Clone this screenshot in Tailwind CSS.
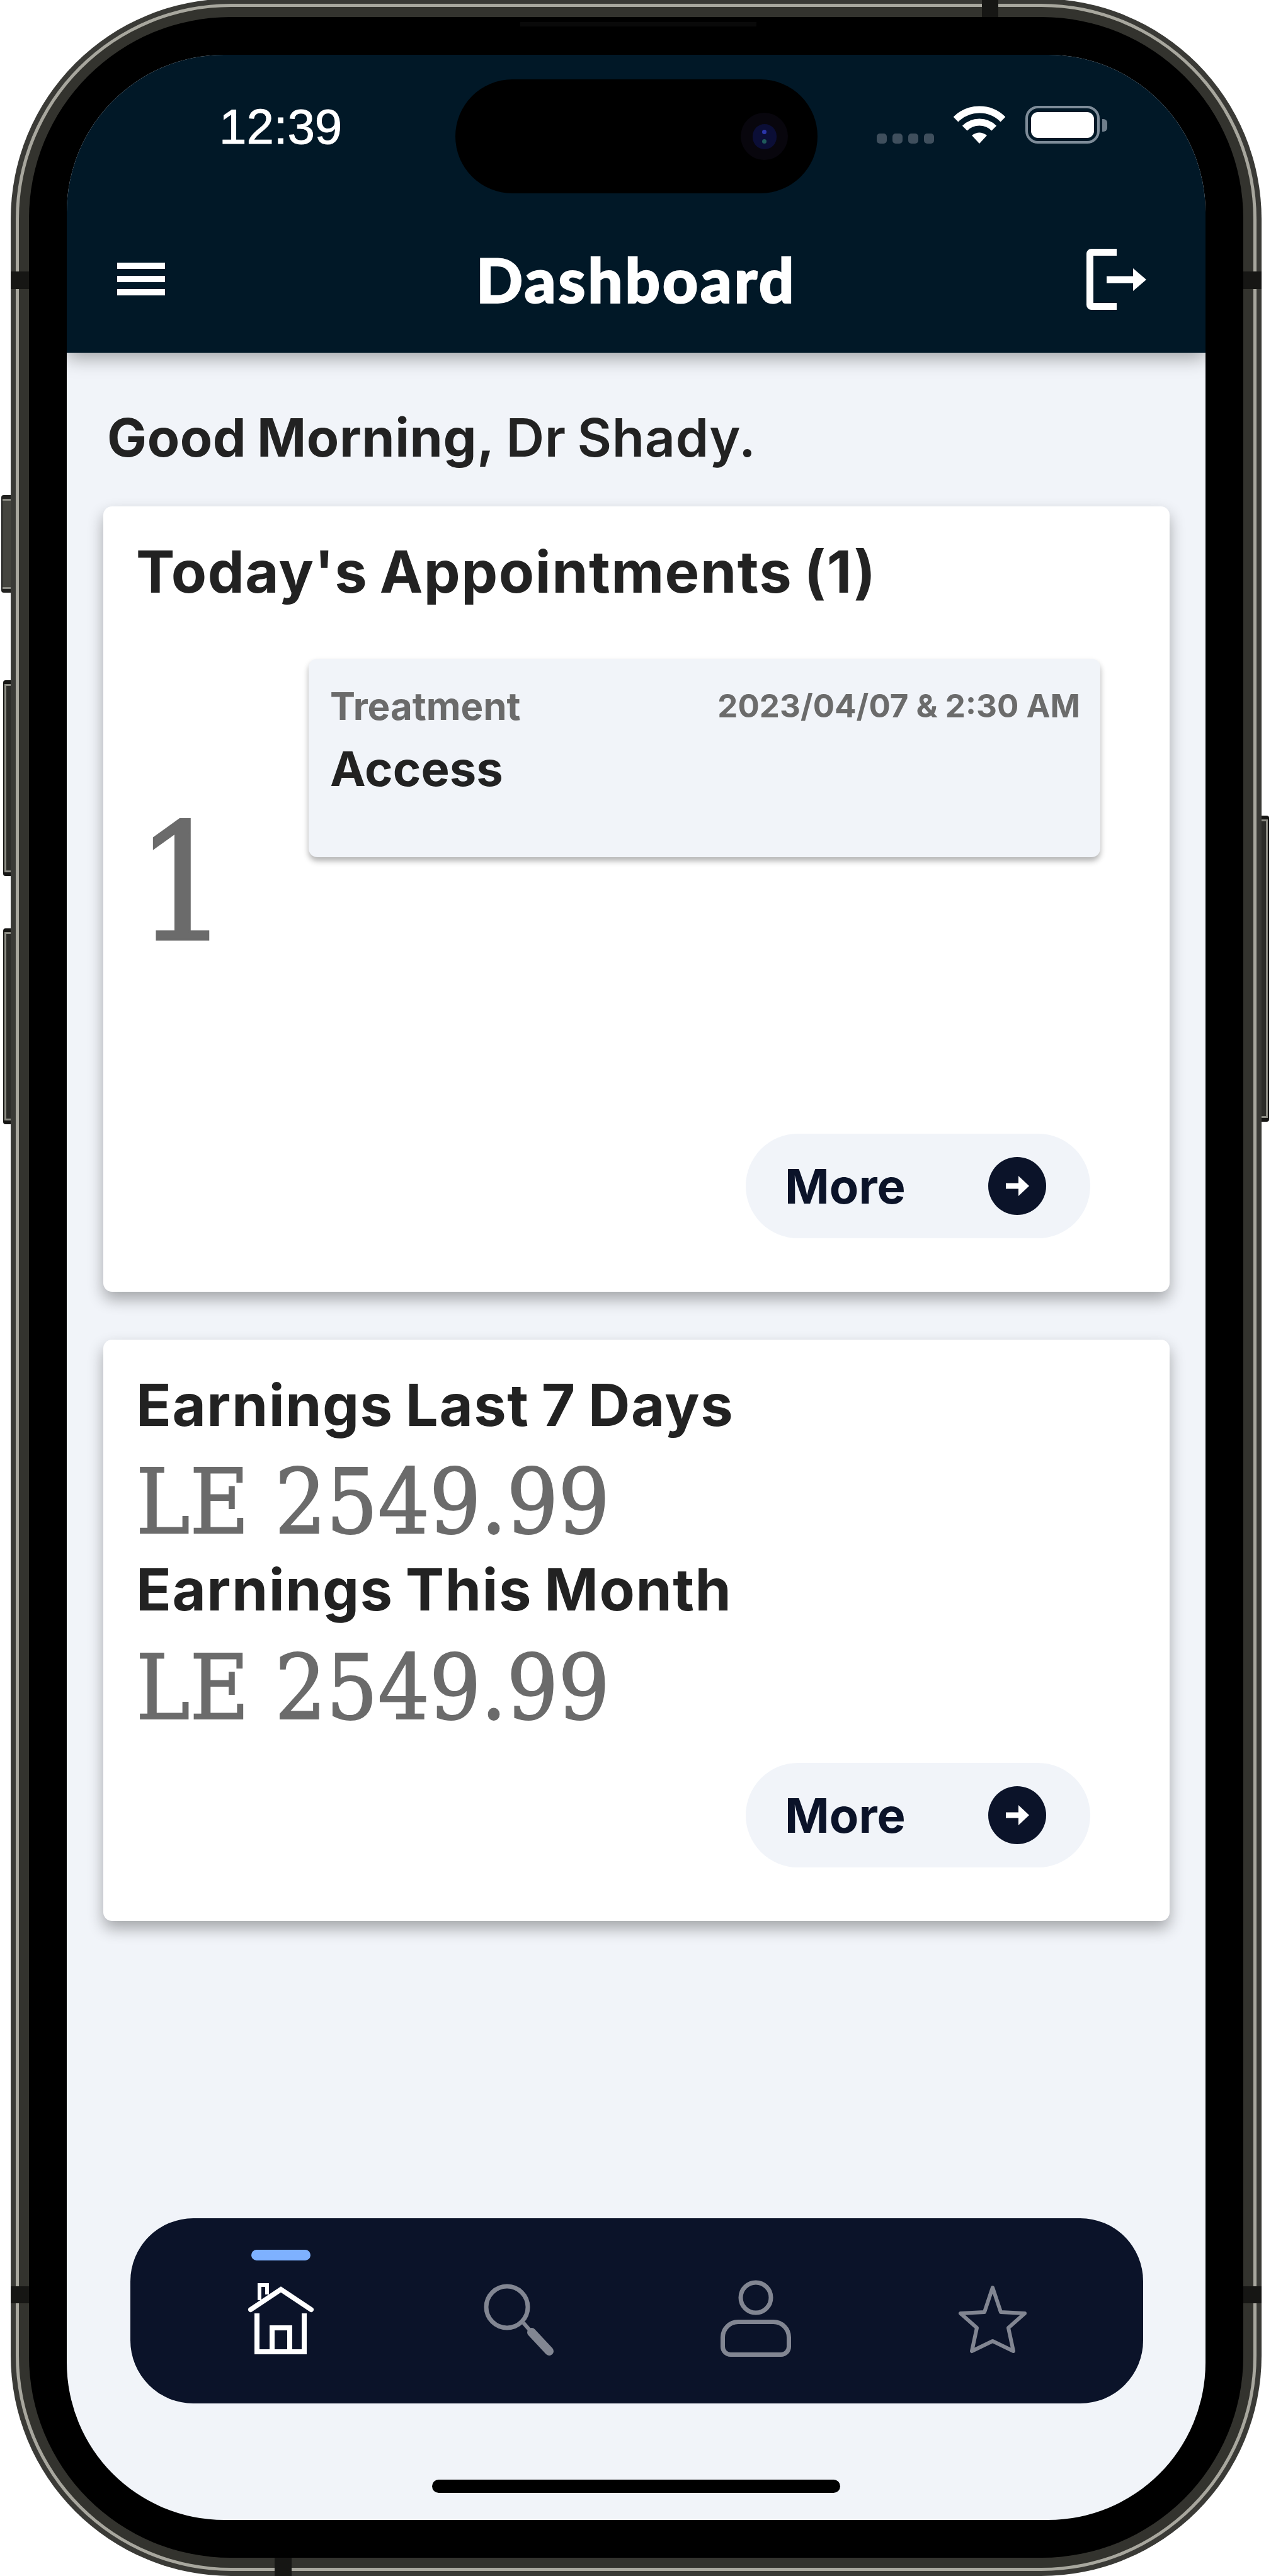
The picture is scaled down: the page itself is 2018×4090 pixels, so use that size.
<!DOCTYPE html>
<html lang="en">
<head>
  <meta charset="UTF-8" />
  <title>Dashboard</title>
  <script src="https://cdn.jsdelivr.net/npm/@tailwindcss/browser@4"></script>
</head>
<body class="bg-white w-[2018px] h-[4090px] overflow-hidden font-['Inter',sans-serif]">

<!-- phone body -->
<div class="relative ml-[17px] -mt-[2px] w-[1986px] h-[4092px] rounded-[350px] bg-[#3a3a36] p-[8px]">

  <!-- side buttons -->
  <div class="absolute -left-[15px] top-[788px] w-[15px] h-[155px] bg-[#222220] rounded-l-[4px] py-[6px] pl-[2px]">
    <div class="h-full border-y-[3px] border-[#8c8c84] bg-[#45453f]"></div>
  </div>
  <div class="absolute -left-[12px] top-[1082px] w-[12px] h-[311px] bg-[#161614] rounded-l-[4px] py-[6px] pl-[2px]">
    <div class="h-full border-y-[3px] border-l-[3px] border-[#8c8c84] bg-[#2c2c29]"></div>
  </div>
  <div class="absolute -left-[12px] top-[1476px] w-[12px] h-[311px] bg-[#161614] rounded-l-[4px] py-[6px] pl-[2px]">
    <div class="h-full border-y-[3px] border-l-[3px] border-[#8c8c84] bg-[#2c2c29]"></div>
  </div>
  <div class="absolute -right-[12px] top-[1297px] w-[12px] h-[486px] bg-[#161614] rounded-r-[4px] py-[6px] pr-[2px]">
    <div class="h-full border-y-[3px] border-r-[3px] border-[#8c8c84] bg-[#2c2c29]"></div>
  </div>

  <!-- rings of the frame -->
  <div class="h-full rounded-[342px] bg-[#a8a79e] p-[5px]">
    <div class="h-full rounded-[337px] bg-[#33332e] p-[16px]">
      <div class="relative h-full rounded-[320px] bg-black p-[60px]">

        <div class="absolute top-[8px] left-[780px] w-[375px] h-[7px] bg-[#090909]"></div>

        <!-- screen -->
        <div class="relative h-full rounded-[250px] overflow-hidden bg-[#f1f4f9] flex flex-col">

          <!-- dynamic island -->
          <div class="absolute top-[39px] left-[617px] w-[575px] h-[181px] rounded-full bg-black z-20 flex items-center justify-end pr-[47px]">
            <div class="w-[75px] h-[75px] rounded-full bg-[#08060d] flex items-center justify-center">
              <div class="w-[38px] h-[40px] rounded-full bg-[#0b0e36] flex flex-col items-center justify-center gap-[8px]">
                <div class="w-[7px] h-[7px] rounded-full bg-[#2b35a8]"></div>
                <div class="w-[7px] h-[7px] rounded-full bg-[#1f5a5a]"></div>
              </div>
            </div>
          </div>

          <!-- header -->
          <header class="relative z-10 h-[473px] shrink-0 bg-[#011827] shadow-[0_8px_28px_rgba(0,0,0,0.35)] text-white">
            <div class="pt-[75px] h-[153px] flex items-start pl-[242px] pr-[156px]">
              <span class="font-['Liberation_Sans',sans-serif] text-[78px] leading-[78px] [-webkit-text-stroke:1px_#fff]">12:39</span>
              <div class="ml-auto mt-[6px] flex items-end">
                <div class="flex gap-[9px]">
                  <span class="w-[16px] h-[16px] rounded-[5px] bg-[#3f4f5d]"></span>
                  <span class="w-[16px] h-[16px] rounded-[5px] bg-[#3f4f5d]"></span>
                  <span class="w-[16px] h-[16px] rounded-[5px] bg-[#3f4f5d]"></span>
                  <span class="w-[16px] h-[16px] rounded-[5px] bg-[#3f4f5d]"></span>
                </div>
                <svg class="ml-[31px]" width="82" height="60" viewBox="0 0 82 60" fill="none" stroke="#fff" stroke-width="11">
                  <path d="M3.5 21.5a53 53 0 0 1 75 0" />
                  <path d="M17.7 35.7a33 33 0 0 1 46.6 0" />
                  <path d="M41 60 29 47q12-9 24 0z" fill="#fff" stroke="none" />
                </svg>
                <div class="ml-[32px] w-[118px] h-[60px] rounded-[20px] border-[4px] border-[#7e8c99] flex items-center justify-center">
                  <div class="w-[100px] h-[41px] rounded-[11px] bg-white"></div>
                </div>
                <div class="ml-[4px] mb-[19px] w-[8px] h-[20px] rounded-r-[6px] bg-[#6f7e8b]"></div>
              </div>
            </div>
            <div class="mt-[153px] h-[100px] flex items-center px-[80px]">
              <div class="flex-1 mr-[9px]">
                <div class="w-[76px] flex flex-col gap-[11px]">
                  <div class="h-[10px] bg-white"></div>
                  <div class="h-[10px] bg-white"></div>
                  <div class="h-[10px] bg-white"></div>
                </div>
              </div>
              <h1 class="font-['Lato',sans-serif] font-black text-[98px] leading-[100px] tracking-[3.5px] [-webkit-text-stroke:2px_#fff]">Dashboard</h1>
              <div class="flex-1 flex justify-end mr-[9px]">
                <svg width="105" height="107" viewBox="0 0 105 107" fill="none" stroke="#fff" stroke-width="11">
                  <path d="M53 10.500H13a2.500 2.500 0 0 0-2.500 2.500v81a2.500 2.500 0 0 0 2.500 2.500h40" />
                  <path d="M37 54h46" />
                  <path d="M79 36l21 18-21 18z" fill="#fff" stroke="none" />
                </svg>
              </div>
            </div>
          </header>

          <!-- main -->
          <main class="flex-1 flex flex-col pl-[58px]">
            <p class="mt-[85px] ml-[6px] text-[84px] leading-[100px] text-[#222] font-semibold tracking-[0.6px] [word-spacing:-4px]"><span class="font-bold">Good Morning,</span> Dr Shady.</p>

            <!-- appointments -->
            <section class="mt-[59px] w-[1693px] h-[1247px] bg-white rounded-[14px] shadow-[0_12px_24px_rgba(0,0,0,0.32)] pt-[49px] pl-[52px] flex flex-col">
              <h2 class="text-[92px] leading-[110px] font-bold text-[#222] tracking-[1.5px] [word-spacing:-5px]">Today's Appointments (1)</h2>
              <div class="mt-[83px] flex items-start">
                <span class="w-[274px] shrink-0 mt-[228px] font-['DejaVu_Serif_Condensed','DejaVu_Serif',serif] [font-stretch:condensed] text-[258px] leading-none text-[#6b6b6b] [-webkit-text-stroke:3px_#6b6b6b]">1</span>
                <div class="w-[1257px] h-[315px] bg-[#f1f4f9] rounded-[14px] shadow-[0_6px_10px_rgba(0,0,0,0.3)] pl-[34px] pr-[32px] pt-[40px]">
                  <div class="flex justify-between items-center h-[70px]">
                    <span class="text-[60px] font-bold text-[#6b6b6b]">Treatment</span>
                    <span class="text-[51px] font-bold text-[#6b6b6b]">2023/04/07 &amp; 2:30 AM</span>
                  </div>
                  <p class="mt-[18px] text-[76px] leading-[92px] font-bold text-[#222]">Access</p>
                </div>
              </div>
              <button class="mt-auto mb-[85px] ml-auto mr-[126px] w-[547px] h-[166px] rounded-full bg-[#f1f4f9] flex items-center justify-between pl-[62px] pr-[70px] text-[76px] font-bold text-[#0b1329]">
                More
                <span class="w-[92px] h-[92px] rounded-full bg-[#0b1329] flex items-center justify-center">
                  <svg width="37" height="32" viewBox="0 0 37 32" fill="none"><path d="M0 16h24" stroke="#fff" stroke-width="9"/><path d="M20 0l17 16-17 16z" fill="#fff"/></svg>
                </span>
              </button>
            </section>

            <!-- earnings -->
            <section class="mt-[76px] w-[1693px] h-[923px] bg-white rounded-[14px] shadow-[0_12px_24px_rgba(0,0,0,0.32)] pt-[49px] pl-[52px] flex flex-col">
              <h2 class="text-[92px] leading-[110px] font-bold text-[#222] tracking-[1.5px] [word-spacing:-4px]">Earnings Last 7 Days</h2>
              <p class="mt-[24px] font-['DejaVu_Serif_Condensed','DejaVu_Serif',serif] [font-stretch:condensed] text-[143px] leading-[150px] text-[#6b6b6b] [-webkit-text-stroke:2px_#6b6b6b]">LE 2549.99</p>
              <h2 class="mt-[9px] text-[92px] leading-[110px] font-bold text-[#222] tracking-[1.5px] [word-spacing:-4px]">Earnings This Month</h2>
              <p class="mt-[26px] font-['DejaVu_Serif_Condensed','DejaVu_Serif',serif] [font-stretch:condensed] text-[143px] leading-[150px] text-[#6b6b6b] [-webkit-text-stroke:2px_#6b6b6b]">LE 2549.99</p>
              <button class="mt-auto mb-[85px] ml-auto mr-[126px] w-[547px] h-[166px] rounded-full bg-[#f1f4f9] flex items-center justify-between pl-[62px] pr-[70px] text-[76px] font-bold text-[#0b1329]">
                More
                <span class="w-[92px] h-[92px] rounded-full bg-[#0b1329] flex items-center justify-center">
                  <svg width="37" height="32" viewBox="0 0 37 32" fill="none"><path d="M0 16h24" stroke="#fff" stroke-width="9"/><path d="M20 0l17 16-17 16z" fill="#fff"/></svg>
                </span>
              </button>
            </section>

            <!-- bottom nav -->
            <nav class="mt-auto mb-[121px] ml-[43px] w-[1608px] h-[294px] rounded-[100px] bg-[#0b1329] px-[50px] grid grid-cols-4 justify-items-center items-start">
              <div class="flex flex-col items-center pt-[50px]">
                <div class="w-[94px] h-[17px] rounded-full bg-[#7eb1ff]"></div>
                <svg class="mt-[36px]" width="106" height="113" viewBox="0 0 106 113" fill="none" stroke="#fff">
                  <path d="M5 42 53 10l48 32" stroke-width="8" stroke-linecap="round"/>
                  <path d="M19 27V3h12v15" stroke-width="6"/>
                  <path d="M15 48v61h75V48" stroke-width="8"/>
                  <path d="M39 109V71h28v38" stroke-width="8"/>
                </svg>
              </div>
              <svg class="mt-[100px]" width="118" height="118" viewBox="0 0 118 118" fill="none" stroke="#828692">
                <circle cx="41" cy="41" r="33" stroke-width="7"/>
                <path d="M67 66 80 81" stroke-width="6"/>
                <path d="M80 81l28 30" stroke-width="14" stroke-linecap="round"/>
              </svg>
              <svg class="mt-[94px]" width="120" height="130" viewBox="0 0 120 130" fill="none" stroke="#828692" stroke-width="7">
                <circle cx="60" cy="32" r="24"/>
                <path d="M32 70.500H88a24.500 24.500 0 0 1 24.500 24.500V110a12.500 12.500 0 0 1-12.500 12.500H20A12.500 12.500 0 0 1 7.500 110V95A24.500 24.500 0 0 1 32 70.500Z"/>
              </svg>
              <svg class="mt-[102px]" width="117" height="117" viewBox="0 0 117 117" fill="none" stroke="#828692" stroke-width="6" stroke-linejoin="round">
                <path d="M58 8 71 47l38 2-26 23 8 37-33-16-33 16 8-37L7 49l38-2Z"/>
              </svg>
            </nav>

            <!-- home indicator -->
            <div class="mb-[43px] ml-[522px] w-[648px] h-[21px] rounded-full bg-black"></div>
          </main>
        </div>
      </div>
    </div>
  </div>

  <!-- dark antenna bands across the frame -->
  <div class="absolute left-0 top-[433px] w-[29px] h-[28px] bg-[#161614]"></div>
  <div class="absolute right-0 top-[433px] w-[29px] h-[28px] bg-[#161614]"></div>
  <div class="absolute left-0 top-[3632px] w-[29px] h-[27px] bg-[#161614]"></div>
  <div class="absolute right-0 top-[3632px] w-[29px] h-[27px] bg-[#161614]"></div>
  <div class="absolute top-0 left-[1542px] w-[26px] h-[29px] bg-[#161614]"></div>
  <div class="absolute bottom-0 left-[419px] w-[27px] h-[29px] bg-[#161614]"></div>
</div>

</body>
</html>
